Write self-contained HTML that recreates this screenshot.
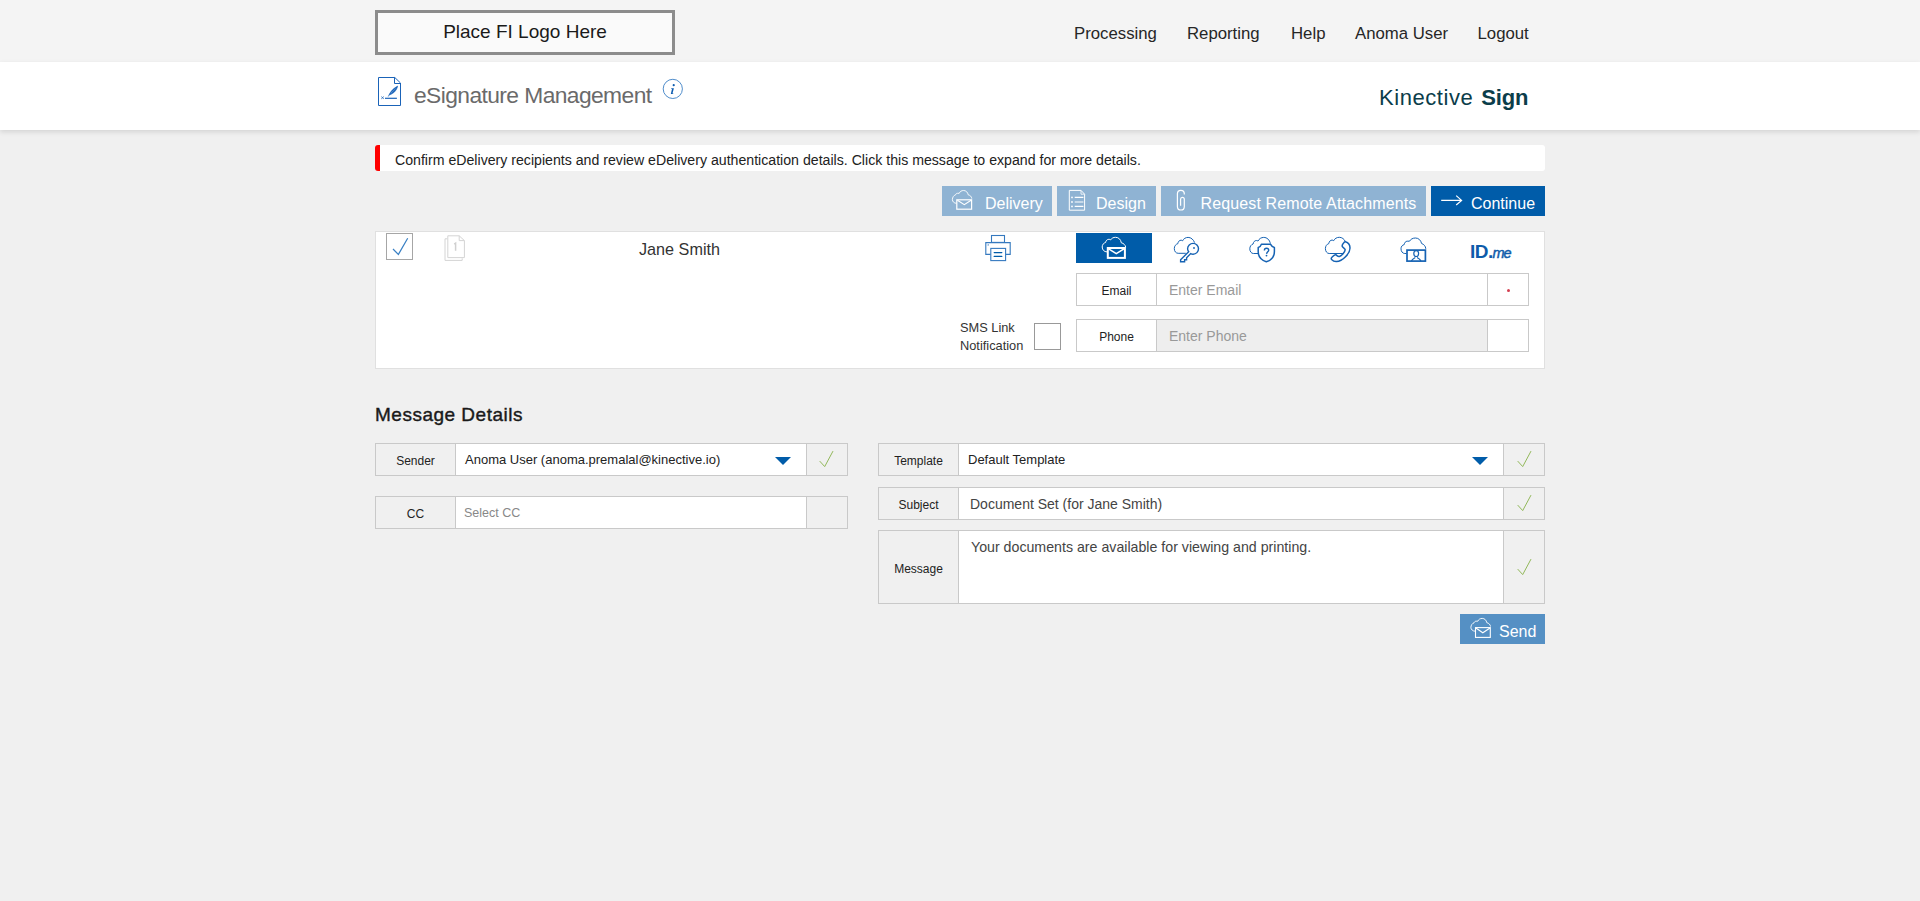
<!DOCTYPE html>
<html><head><meta charset="utf-8">
<style>
*{box-sizing:border-box;margin:0;padding:0}
html,body{width:1920px;height:901px;overflow:hidden;background:#f0f0f0;font-family:"Liberation Sans",sans-serif;color:#222}
.a{position:absolute}
#top{left:0;top:0;width:1920px;height:62px;background:#f4f4f4}
#logo{left:375px;top:10px;width:300px;height:45px;border:3px solid #8c8c8c;background:#fafafa;font-size:19px;color:#1a1a1a;text-align:center;line-height:37px}
.nav{top:24px;font-size:16.75px;color:#262626;white-space:nowrap}
#band{left:0;top:62px;width:1920px;height:68px;background:#fff;box-shadow:0 2px 5px rgba(0,0,0,.12)}
#title{left:414px;top:82px;font-size:22.8px;letter-spacing:-0.58px;color:#6a6a6a;white-space:nowrap}
#kin{left:1379px;top:84.5px;font-size:22px;color:#0b3d4a;white-space:nowrap}
#alert{left:375px;top:145px;width:1170px;height:26px;background:#fff;border-radius:3px;border-left:5px solid #f00}
#alert span{position:absolute;left:15px;top:7px;font-size:14.15px;color:#222;white-space:nowrap}
.btn{top:186px;height:30px;background:#8fb3d3;color:#fff;font-size:16px;white-space:nowrap}
.btn span{position:absolute;top:10px;line-height:16px}
#panel{left:375px;top:231px;width:1170px;height:138px;background:#fff;border:1px solid #e0e0e0}
.grp{border:1px solid #c9c9c9;background:#fff}
.lbl{position:absolute;top:0;bottom:0;left:0;width:80px;padding-top:2px;border-right:1px solid #c9c9c9;text-align:center;font-size:12px;color:#222}
.inp{position:absolute;top:0;bottom:0;font-size:14px;color:#999}
.add{position:absolute;top:0;bottom:0;right:0;border-left:1px solid #c9c9c9}
h2{position:absolute;left:375px;top:404px;font-size:19px;font-weight:normal;color:#1a1a1a;-webkit-text-stroke:0.4px #1a1a1a;letter-spacing:0.5px}
</style></head><body>
<div id="top" class="a"></div>
<div id="logo" class="a">Place FI Logo Here</div>
<div class="a nav" style="left:1074px">Processing</div>
<div class="a nav" style="left:1187px">Reporting</div>
<div class="a nav" style="left:1291px">Help</div>
<div class="a nav" style="left:1355px">Anoma User</div>
<div class="a nav" style="left:1477.5px">Logout</div>
<div id="band" class="a"></div>
<div id="title" class="a">eSignature Management</div>
<div id="kin" class="a"><span style="letter-spacing:0.55px">Kinective</span> <b style="letter-spacing:-0.2px;margin-left:2px">Sign</b></div>

<div id="alert" class="a"><span>Confirm eDelivery recipients and review eDelivery authentication details. Click this message to expand for more details.</span></div>

<div class="a btn" style="left:942px;width:110px"><span style="left:43px">Delivery</span></div>
<div class="a btn" style="left:1057px;width:99px"><span style="left:39px">Design</span></div>
<div class="a btn" style="left:1161px;width:265px"><span style="left:39.5px;letter-spacing:0.13px">Request Remote Attachments</span></div>
<div class="a btn" style="left:1431px;width:114px;background:#005ca9"><span style="left:40px">Continue</span></div>

<div id="panel" class="a"></div>
<div class="a" style="left:639px;top:240px;font-size:16.2px;color:#333">Jane Smith</div>

<div class="a" style="left:960px;top:319px;font-size:12.8px;line-height:18px;color:#333">SMS Link<br>Notification</div>
<div class="a" style="left:1034px;top:323px;width:27px;height:27px;border:1px solid #999;background:#fff"></div>

<div class="a" style="left:1076px;top:233px;width:76px;height:30px;background:#005ca9"></div>

<div class="a grp" style="left:1076px;top:273px;width:453px;height:33px">
  <div class="lbl" style="line-height:30px">Email</div>
  <div class="inp" style="left:80px;right:40px;border-right:1px solid #c9c9c9;padding-left:12px;line-height:33px">Enter Email</div>
</div>
<div class="a grp" style="left:1076px;top:319px;width:453px;height:33px">
  <div class="lbl" style="line-height:30px">Phone</div>
  <div class="inp" style="left:80px;right:40px;border-right:1px solid #c9c9c9;padding-left:12px;line-height:33px;background:#eee">Enter Phone</div>
</div>

<h2>Message Details</h2>


<!-- sender -->
<div class="a grp" style="left:375px;top:443px;width:473px;height:33px;background:#f0f0f0">
  <div class="lbl" style="line-height:31px">Sender</div>
  <div class="inp" style="left:80px;right:40px;border-right:1px solid #c9c9c9;padding-left:9px;line-height:31px;background:#fff;color:#222;font-size:13px">Anoma User (anoma.premalal@kinective.io)</div>
</div>
<div class="a grp" style="left:375px;top:496px;width:473px;height:33px;background:#f0f0f0">
  <div class="lbl" style="line-height:31px">CC</div>
  <div class="inp" style="left:80px;right:40px;border-right:1px solid #c9c9c9;padding-left:8px;padding-top:1px;line-height:31px;background:#fff;color:#888;font-size:12.5px">Select CC</div>
</div>
<!-- template -->
<div class="a grp" style="left:878px;top:443px;width:667px;height:33px;background:#f0f0f0">
  <div class="lbl" style="line-height:31px">Template</div>
  <div class="inp" style="left:80px;right:40px;border-right:1px solid #c9c9c9;padding-left:9px;line-height:31px;background:#fff;color:#222;font-size:13px">Default Template</div>
</div>
<div class="a grp" style="left:878px;top:487px;width:667px;height:33px;background:#f0f0f0">
  <div class="lbl" style="line-height:31px">Subject</div>
  <div class="inp" style="left:80px;right:40px;border-right:1px solid #c9c9c9;padding-left:11px;padding-top:1px;line-height:31px;background:#fff;color:#444;font-size:14px">Document Set (for Jane Smith)</div>
</div>
<div class="a grp" style="left:878px;top:530px;width:667px;height:74px;background:#f0f0f0">
  <div class="lbl" style="line-height:72px">Message</div>
  <div class="inp" style="left:80px;right:40px;border-right:1px solid #c9c9c9;padding-left:12px;padding-top:7px;line-height:18px;background:#fff;color:#444;font-size:14.2px">Your documents are available for viewing and printing.</div>
</div>
<div class="a btn" style="left:1460px;top:614px;width:85px;background:#5590c4"><span style="left:39px">Send</span></div>

<!-- header doc icon -->
<svg class="a" style="left:372px;top:72px" width="36" height="38" viewBox="0 0 36 38" fill="none" stroke="#1a63b8">
<path d="M6.5,5.5 H22.8 L28.5,11 V33.5 H6.5 Z" stroke-width="1"/>
<path d="M22.5,5.5 V11.5 H28.5" stroke-width="1"/>
<path d="M13,26.3 H24.9" stroke-width="1.2"/>
<path d="M9.3,24.6 L11.8,26.8 M11.8,24.6 L9.3,26.8" stroke-width="0.8"/>
<path d="M16.2,24.6 C18,21 19.5,17.5 25.7,14.1 C24.5,19 21.5,21.5 17.5,23" fill="#1a63b8" stroke-width="0.6"/><path d="M18.8,21.2 L23.6,16.6" stroke="#8ab4e0" stroke-width="0.5"/>
</svg>
<svg class="a" style="left:655px;top:72px" width="40" height="38" viewBox="0 0 40 38">
<circle cx="17.8" cy="16.9" r="9.6" fill="none" stroke="#3b7fc4" stroke-width="0.9"/>
<circle cx="18.7" cy="13.2" r="1.1" fill="#0d5cb0"/>
<path d="M16.3,16.2 H18.9 L17.6,21 Q17.5,21.6 18.4,21.5 L18.3,22.1 H15.8 L17,17 H16.2 Z" fill="#0d5cb0"/>
</svg>

<!-- delivery button icon -->
<svg class="a" style="left:942px;top:184px" width="40" height="32" viewBox="0 0 40 32" fill="none" stroke="#fff" stroke-width="1.1">
<path d="M14.4,19.3 C12.1,19.2 10.4,17.6 10.4,15.6 C10.4,13.4 11.7,11.3 13.5,10.9 C13.8,9.9 14.5,9.3 15.5,9.3 L17.2,9.3 C17.8,7.6 19.6,6.5 21.6,6.5 C24,6.5 25.8,8.4 26.2,10.8 C28.2,11.3 29.6,12.6 29.8,14.6" stroke-width="0.9"/>
<rect x="14.8" y="15.8" width="14.8" height="9.4" stroke-width="1.2"/>
<path d="M15.4,16.2 L22.3,20.6 L29.1,16.2"/>
</svg>
<!-- design button icon -->
<svg class="a" style="left:1055px;top:184px" width="40" height="32" viewBox="0 0 40 32" fill="none" stroke="#fff" stroke-width="1">
<path d="M14.3,6.4 H26 L29.6,10.2 V26.2 H14.3 Z"/>
<path d="M26,6.4 V10.2 H29.6" stroke-width="0.8"/>
<path d="M19.7,13.4 H28.4 M19.7,18 H28.4 M19.7,22.4 H28.4" stroke-width="1.1"/>
<circle cx="17" cy="13.4" r="0.9" fill="#fff" stroke="none"/>
<circle cx="17" cy="18" r="0.9" fill="#fff" stroke="none"/>
<circle cx="17" cy="22.4" r="0.9" fill="#fff" stroke="none"/>
</svg>
<!-- paperclip -->
<svg class="a" style="left:1160px;top:184px" width="40" height="32" viewBox="0 0 40 32" fill="none" stroke="#fff" stroke-width="1.2">
<path d="M24.3,10.6 V9.8 C24.3,7.7 22.7,6.3 20.8,6.3 C18.9,6.3 17.4,7.7 17.4,9.8 V22.4 C17.4,24.6 18.9,26 20.9,26 C22.9,26 24.3,24.6 24.3,22.4 V15.2 C24.3,14 23.5,13.3 22.4,13.3 C21.3,13.3 20.6,14 20.6,15.2 V21.8"/>
</svg>
<!-- continue arrow -->
<svg class="a" style="left:1430px;top:184px" width="40" height="32" viewBox="0 0 40 32" fill="none" stroke="#fff" stroke-width="1.2">
<path d="M11.2,16.4 H31.6 M26.2,11.6 L31.6,16.4 L26.2,21"/>
</svg>
<!-- send icon -->
<svg class="a" style="left:1458px;top:612px" width="40" height="32" viewBox="0 0 40 32" fill="none" stroke="#fff" stroke-width="1.1">
<path d="M17.1,19.2 C14.8,19.1 12.9,17.5 12.9,15.5 C12.9,13.3 14.3,11.2 16.1,10.8 C16.4,9.8 17.1,9.2 18.1,9.2 L19.8,9.2 C20.4,7.5 22.2,6.4 24.2,6.4 C26.6,6.4 28.4,8.3 28.8,10.7 C30.8,11.2 32.3,12.5 32.5,14.5" stroke-width="0.9"/>
<rect x="17.5" y="15.6" width="14.8" height="9.8"/>
<path d="M17.9,16 L24.8,20.8 L32,16"/>
</svg>

<!-- checkbox checked -->
<div class="a" style="left:386px;top:233px;width:27px;height:27px;border:1px solid #a6a6a6;background:#fff"></div>
<svg class="a" style="left:370px;top:225px" width="50" height="40" viewBox="0 0 50 40" fill="none" stroke="#3a80c4" stroke-width="1.2">
<path d="M23,24 L28.4,29.4 L37.7,13.2"/>
</svg>
<!-- doc stack icon -->
<svg class="a" style="left:440px;top:232px" width="30" height="32" viewBox="0 0 30 32" fill="none" stroke="#d4d4d4" stroke-width="1">
<path d="M5,6.8 H7.4 M5,6.8 V28.4 H22.2 V26.4"/>
<path d="M7.8,3.8 H19.2 L24.4,8.6 V25.6 H7.8 Z" />
<path d="M19.2,3.8 V8.6 H24.4" />
<path d="M14.2,12.2 L15.6,11.2 V18.8" stroke-width="1.5" stroke="#d0d0d0"/>
</svg>
<!-- printer -->
<svg class="a" style="left:975px;top:230px" width="45" height="36" viewBox="0 0 45 36" fill="none" stroke="#3579bf" stroke-width="1.1">
<rect x="16.5" y="5.5" width="13" height="6.9"/>
<path d="M15.6,24.4 H10.8 V12.6 H35.2 V24.4 H30.6"/>
<rect x="15.8" y="18.4" width="14.8" height="12.2"/>
<circle cx="13.2" cy="14.9" r="0.7" fill="#3579bf" stroke="none"/>
<path d="M19.2,22.6 H26.8 M19.2,26.4 H26.8" stroke="#005ca9" stroke-width="1.3" stroke-linecap="round"/>
</svg>

<!-- active tab envelope -->
<svg class="a" style="left:1096px;top:232px" width="40" height="32" viewBox="0 0 40 32" fill="none" stroke="#fff">
<path d="M11,19.9 C8.2,19.9 6.2,17.8 6.2,15 C6.2,12.7 7.6,11 9.6,10.5 C9.8,8.6 11.2,7.3 12.9,7.3 C13.6,7.3 14.1,7.5 14.6,7.9 C15.6,6.2 17.5,5.3 19.6,5.3 C22.6,5.3 24.9,7.6 25.3,10.8 C27.6,11.3 29.4,13 29.7,15.2" stroke-width="1"/>
<rect x="11.8" y="16" width="17.1" height="9.9" stroke-width="2"/>
<path d="M12.2,16.6 L20.3,21.6 L28.4,16.6" stroke-width="1.6"/>
</svg>
<!-- key -->
<svg class="a" style="left:1168px;top:232px" width="40" height="34" viewBox="0 0 40 34" fill="none" stroke="#1562b3">
<path d="M17.8,21.3 H10.2 C7.9,21.3 6.3,19.3 6.3,16.6 C6.3,14 7.8,12.2 9.8,11.7 C10.1,9.7 11.3,8.2 13.1,8.2 C13.7,8.2 14.2,8.4 14.6,8.8 C15.6,6.6 17.8,5.4 20.1,5.4 C23.1,5.4 25.4,7.6 26.6,10.6" stroke-width="1"/>
<path d="M20.7,19.7 C19.9,18.8 19.6,17.8 19.6,16.8 C19.6,13.8 22.1,11.4 25.1,11.4 C28.1,11.4 30.5,13.8 30.5,16.8 C30.5,19.8 28.1,22.2 25.1,22.2 C24.2,22.2 23.4,22 22.7,21.6 L18.6,25.8 V27.8 H16.6 V29.7 H12.6 V27.7 Z" stroke-width="1.4" stroke-linejoin="miter"/>
<circle cx="26" cy="16" r="0.9" fill="#1562b3" stroke="none"/>
</svg>
<!-- shield -->
<svg class="a" style="left:1244px;top:232px" width="40" height="34" viewBox="0 0 40 34" fill="none" stroke="#1562b3">
<path d="M14.2,21.5 H9.4 C7.3,21.5 5.8,19.4 5.8,16.8 C5.8,14.3 7.2,12.6 9.1,12 C9.4,10 10.6,8.5 12.4,8.5 C13,8.5 13.6,8.7 14,9.1 C15,6.8 17.3,5.4 19.7,5.4 C23,5.4 25.6,7.8 26.4,11.6" stroke-width="1"/>
<path d="M17.4,12.3 H26.6 C27.3,14 28.6,15.2 30.4,15.5 V19.5 C30.4,24.5 27,28.3 22.3,29.8 C17.6,28.3 14.2,24.5 14.2,19.5 V15.5 C16,15.2 16.8,14 17.4,12.3 Z" stroke-width="1.5" stroke-linejoin="round"/>
<path d="M20.4,18.4 C20.4,17 21.3,16.3 22.5,16.3 C23.8,16.3 24.7,17.1 24.7,18.2 C24.7,19.7 22.8,20 22.6,21.8" stroke-width="1.4"/>
<circle cx="22.5" cy="23.6" r="0.9" fill="#1562b3" stroke="none"/>
</svg>
<!-- phone -->
<svg class="a" style="left:1320px;top:232px" width="40" height="34" viewBox="0 0 40 34" fill="none" stroke="#1562b3">
<path d="M23.5,21.5 H9.2 C7,21.5 5.4,19.3 5.4,16.6 C5.4,14 6.9,12.1 8.8,11.6 C9.1,9.5 10.3,8.1 12.1,8.1 C12.7,8.1 13.3,8.3 13.7,8.7 C14.7,6.5 16.9,5.3 19.3,5.3 C22,5.3 24.3,7.2 25.3,9.4" stroke-width="1"/>
<path d="M25.4,9.8 C28.4,10.8 30,13.4 30,16 C30,21.5 22.6,29.3 16.4,29.6 C14.4,29.7 12.8,28.8 11.6,27.5 C11,26.8 11.4,25.6 12.4,24.7 C13.5,23.7 15,22.5 15.8,22.8 C17,23.3 17.8,24.8 19.4,24.4 C21.6,23.8 25,20 25.2,17.8 C25.3,16.6 23.2,16 22.4,14.6 C21.8,13.5 22.6,12 23.6,10.9 C24.1,10.3 24.7,9.6 25.4,9.8 Z" stroke-width="1.5"/>
</svg>
<!-- video id -->
<svg class="a" style="left:1396px;top:232px" width="40" height="34" viewBox="0 0 40 34" fill="none" stroke="#1562b3">
<path d="M10.4,21.5 H8.8 C6.6,21.5 5,19.4 5,16.8 C5,14.6 6.3,13 8.2,12.6 C8.5,10.7 9.6,9.2 11.2,9.2 H13.5 C14.6,7.2 16.8,6 19.4,6 C22.6,6 24.8,8.2 25.6,11.5 C27.8,12.3 29.6,14 29.8,16.8" stroke-width="1"/>
<rect x="11" y="18.1" width="18.4" height="11" stroke-width="1.7"/>
<ellipse cx="20.2" cy="21.6" rx="2.4" ry="2.9" stroke-width="1.2"/>
<path d="M15.4,28.9 C16.4,27.2 18,26.2 19.3,25.5 M21.1,25.5 C22.4,26.2 24,27.2 25,28.9" stroke-width="1.2"/>
</svg>
<!-- ID.me -->
<div class="a" style="left:1470px;top:241px;font-size:19px;font-weight:bold;color:#0d5baa;letter-spacing:-0.5px;white-space:nowrap">ID<span style="letter-spacing:-0.9px">.</span><i style="font-size:14.5px;font-weight:normal;letter-spacing:-1px;-webkit-text-stroke:0.45px #0d5baa">me</i></div>

<!-- dropdown triangles & checks -->
<svg class="a" style="left:775px;top:457px" width="16" height="8" viewBox="0 0 16 8"><path d="M0,0 H16 L8,8 Z" fill="#005ca9"/></svg>
<svg class="a" style="left:1472px;top:457px" width="16" height="8" viewBox="0 0 16 8"><path d="M0,0 H16 L8,8 Z" fill="#005ca9"/></svg>
<svg class="a" style="left:810px;top:445px" width="30" height="30" viewBox="0 0 30 30" fill="none" stroke="#92b85a" stroke-width="1"><path d="M9.7,16.1 L14.7,21.6 L23,6.1"/></svg>
<svg class="a" style="left:1508px;top:445px" width="30" height="30" viewBox="0 0 30 30" fill="none" stroke="#92b85a" stroke-width="1"><path d="M9.7,16.1 L14.7,21.6 L23,6.1"/></svg>
<svg class="a" style="left:1508px;top:489px" width="30" height="30" viewBox="0 0 30 30" fill="none" stroke="#92b85a" stroke-width="1"><path d="M9.7,16.1 L14.7,21.6 L23,6.1"/></svg>
<svg class="a" style="left:1508px;top:553px" width="30" height="30" viewBox="0 0 30 30" fill="none" stroke="#92b85a" stroke-width="1"><path d="M9.7,16.1 L14.7,21.6 L23,6.1"/></svg>
<div class="a" style="left:1506.5px;top:288.5px;width:3px;height:3px;border-radius:50%;background:#d43f50"></div>
</body></html>
